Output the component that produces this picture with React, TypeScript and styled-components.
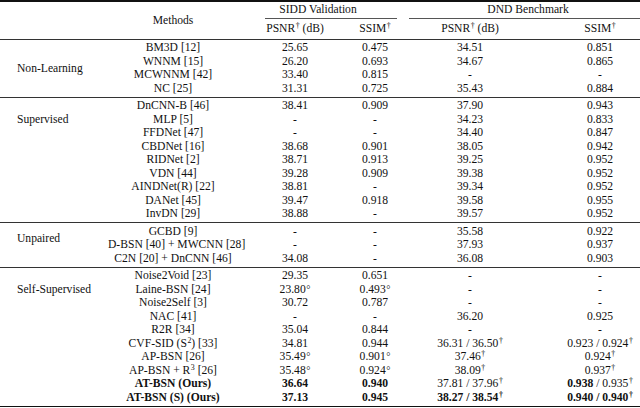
import React from "react";
import styled, { createGlobalStyle } from "styled-components";

const Global = createGlobalStyle`
  html, body { margin: 0; padding: 0; background: #fff; }
  body { font-family: "Liberation Serif", "Times New Roman", serif; color: #111; }
`;

const COLS = "108px 130px 114px 46px 144px 98px";

const Table = styled.div`
  width: 640px;
  font-size: 11.6px;
  display: flex;
  flex-direction: column;
`;

const Rule = styled.div<{ $thick?: boolean }>`
  height: ${(p) => (p.$thick ? "1.5px" : "1px")};
  background: ${(p) => (p.$thick ? "#111" : "#333")};
`;

const HeaderGrid = styled.div`
  display: grid;
  grid-template-columns: ${COLS};
  grid-template-rows: 16px 1px 20px;
`;

const HeadCell = styled.div<{ $col: string; $row: string; $pl?: number }>`
  grid-column: ${(p) => p.$col};
  grid-row: ${(p) => p.$row};
  align-self: center;
  text-align: center;
  padding-left: ${(p) => p.$pl ?? 0}px;
  white-space: nowrap;
`;

const CMidRow = styled.div`
  grid-column: 1 / -1;
  grid-row: 2;
  display: flex;
`;

const CMid = styled.div<{ $from: number; $to: number }>`
  margin-left: ${(p) => p.$from}px;
  width: ${(p) => p.$to - p.$from}px;
  height: 1px;
  background: #555;
`;

const Group = styled.div`
  display: grid;
  grid-template-columns: ${COLS};
  grid-auto-rows: 13.5px;
  padding: 1.5px 0;
`;

const Label = styled.div<{ $span: number }>`
  grid-column: 1;
  grid-row: 1 / span ${(p) => p.$span};
  align-self: center;
  padding-left: 17px;
  white-space: nowrap;
`;

const Cell = styled.div<{ $col: number; $pl?: number }>`
  grid-column: ${(p) => p.$col};
  text-align: center;
  white-space: nowrap;
  line-height: 13.5px;
  padding-left: ${(p) => p.$pl ?? 0}px;
`;

const Sup = styled.sup`
  font-size: 0.68em;
  line-height: 0;
  vertical-align: 0.5em;
  margin-left: 0.5px;
`;

const Deg = styled.span`
  font-size: 0.9em;
  margin-left: 0.5px;
`;

const B = styled.b`
  font-weight: 700;
`;

const D = () => <Sup>†</Sup>;
const C = () => <Deg>°</Deg>;

type Row = { m: React.ReactNode; v: React.ReactNode[] };

const groups: { label: string; span: number; rows: Row[] }[] = [
  {
    label: "Non-Learning",
    span: 4,
    rows: [
      { m: "BM3D [12]", v: ["25.65", "0.475", "34.51", "0.851"] },
      { m: "WNNM [15]", v: ["26.20", "0.693", "34.67", "0.865"] },
      { m: "MCWNNM [42]", v: ["33.40", "0.815", "-", "-"] },
      { m: "NC [25]", v: ["31.31", "0.725", "35.43", "0.884"] },
    ],
  },
  {
    label: "Supervised",
    span: 3,
    rows: [
      { m: "DnCNN-B [46]", v: ["38.41", "0.909", "37.90", "0.943"] },
      { m: "MLP [5]", v: ["-", "-", "34.23", "0.833"] },
      { m: "FFDNet [47]", v: ["-", "-", "34.40", "0.847"] },
      { m: "CBDNet [16]", v: ["38.68", "0.901", "38.05", "0.942"] },
      { m: "RIDNet [2]", v: ["38.71", "0.913", "39.25", "0.952"] },
      { m: "VDN [44]", v: ["39.28", "0.909", "39.38", "0.952"] },
      { m: "AINDNet(R) [22]", v: ["38.81", "-", "39.34", "0.952"] },
      { m: "DANet [45]", v: ["39.47", "0.918", "39.58", "0.955"] },
      { m: "InvDN [29]", v: ["38.88", "-", "39.57", "0.952"] },
    ],
  },
  {
    label: "Unpaired",
    span: 2,
    rows: [
      { m: "GCBD [9]", v: ["-", "-", "35.58", "0.922"] },
      { m: "D-BSN [40] + MWCNN [28]", v: ["-", "-", "37.93", "0.937"] },
      { m: "C2N [20] + DnCNN [46]", v: ["34.08", "-", "36.08", "0.903"] },
    ],
  },
  {
    label: "Self-Supervised",
    span: 3,
    rows: [
      { m: "Noise2Void [23]", v: ["29.35", "0.651", "-", "-"] },
      { m: "Laine-BSN [24]", v: [<>23.80<C /></>, <>0.493<C /></>, "-", "-"] },
      { m: "Noise2Self [3]", v: ["30.72", "0.787", "-", "-"] },
      { m: "NAC [41]", v: ["-", "-", "36.20", "0.925"] },
      { m: "R2R [34]", v: ["35.04", "0.844", "-", "-"] },
      {
        m: <>CVF-SID (S<Sup>2</Sup>) [33]</>,
        v: ["34.81", "0.944", <>36.31 / 36.50<D /></>, <>0.923 / 0.924<D /></>],
      },
      { m: "AP-BSN [26]", v: [<>35.49<C /></>, <>0.901<C /></>, <>37.46<D /></>, <>0.924<D /></>] },
      {
        m: <>AP-BSN + R<Sup>3</Sup> [26]</>,
        v: [<>35.48<C /></>, <>0.924<C /></>, <>38.09<D /></>, <>0.937<D /></>],
      },
      {
        m: <B>AT-BSN (Ours)</B>,
        v: [<B>36.64</B>, <B>0.940</B>, <>37.81 / 37.96<D /></>, <><B>0.938</B> / 0.935<D /></>],
      },
      {
        m: <B>AT-BSN (S) (Ours)</B>,
        v: [<B>37.13</B>, <B>0.945</B>, <B>38.27 / 38.54<D /></B>, <B>0.940 / 0.940<D /></B>],
      },
    ],
  },
];

export default function App() {
  return (
    <>
      <Global />
      <Table>
        <Rule $thick />
        <HeaderGrid>
          <HeadCell $col="2" $row="1 / 4">Methods</HeadCell>
          <HeadCell $col="3 / 5" $row="1">SIDD Validation</HeadCell>
          <HeadCell $col="5 / 7" $row="1" $pl={18}>DND Benchmark</HeadCell>
          <CMidRow>
            <CMid $from={265} $to={397} />
            <CMid $from={12} $to={243} />
          </CMidRow>
          <HeadCell $col="3" $row="3">PSNR<D /> (dB)</HeadCell>
          <HeadCell $col="4" $row="3">SSIM<D /></HeadCell>
          <HeadCell $col="5" $row="3">PSNR<D /> (dB)</HeadCell>
          <HeadCell $col="6" $row="3" $pl={18}>SSIM<D /></HeadCell>
        </HeaderGrid>
        <Rule />
        {groups.map((g, gi) => (
          <React.Fragment key={g.label}>
            {gi > 0 && <Rule />}
            <Group>
              <Label $span={g.span}>{g.label}</Label>
              {g.rows.map((r, ri) => (
                <React.Fragment key={ri}>
                  <Cell $col={2} style={{ gridRow: ri + 1 }}>{r.m}</Cell>
                  {r.v.map((v, vi) => (
                    <Cell key={vi} $col={vi + 3} $pl={vi === 3 ? 18 : 0} style={{ gridRow: ri + 1 }}>
                      {v}
                    </Cell>
                  ))}
                </React.Fragment>
              ))}
            </Group>
          </React.Fragment>
        ))}
        <Rule $thick />
      </Table>
    </>
  );
}
